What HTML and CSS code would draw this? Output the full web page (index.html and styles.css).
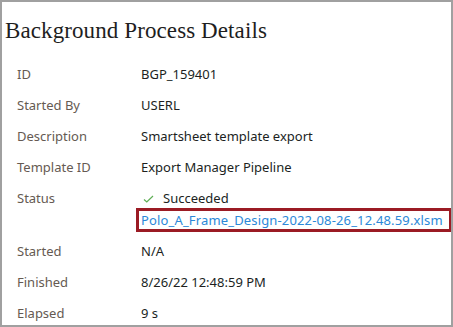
FILE: index.html
```html
<!DOCTYPE html>
<html lang="en">
<head>
    <meta charset="UTF-8">
    <title>Background Process Details</title>
    <link rel="stylesheet" href="styles.css">
</head>
<body>
    <div class="panel">
        <h1>Background Process Details</h1>
        <div class="details">
            <div class="label">ID</div>
            <div class="value">BGP_159401</div>
            <div class="label">Started By</div>
            <div class="value">USERL</div>
            <div class="label">Description</div>
            <div class="value">Smartsheet template export</div>
            <div class="label">Template ID</div>
            <div class="value">Export Manager Pipeline</div>
            <div class="label">Status</div>
            <div class="value">
                <div class="status">
                    <svg class="check" width="11" height="8" viewBox="0 0 11 8"><path d="M1 4.5 L3.8 7 L10 1" fill="none" stroke="#5fae55" stroke-width="1.2"/></svg>
                    <span>Succeeded</span>
                </div>
                <div class="file"><a href="#">Polo_A_Frame_Design-2022-08-26_12.48.59.xlsm</a></div>
            </div>
            <div class="label">Started</div>
            <div class="value">N/A</div>
            <div class="label">Finished</div>
            <div class="value">8/26/22 12:48:59 PM</div>
            <div class="label">Elapsed</div>
            <div class="value">9 s</div>
        </div>
    </div>
</body>
</html>
```
FILE: styles.css
```css
body {
    margin: 0;
    background-color: #fff;
}

.panel {
    width: 453px;
    height: 327px;
    box-sizing: border-box;
    border: 2px solid #a0a0a0;
    padding: 0 0 0 3px;
    overflow: hidden;
}

h1 {
    font-family: "Liberation Serif", serif;
    font-weight: normal;
    font-size: 23px;
    letter-spacing: 0.1px;
    color: #1e1e1e;
    margin: 16px 0 0 0;
    line-height: 26px;
}

.details {
    display: grid;
    grid-template-columns: 124px 1fr;
    margin: 15px 0 0 12px;
    font-family: "Noto Sans", sans-serif;
    font-size: 13px;
    line-height: 31px;
}

.label {
    color: #655a52;
}

.value {
    color: #201f1e;
}

.status {
    display: flex;
    align-items: center;
    gap: 9px;
    padding-left: 2px;
}

.file {
    margin: -6px 0 4px -5px;
    line-height: 18px;
    border: 3px solid #9b1b24;
    width: max-content;
    white-space: nowrap;
    padding: 0 6px 0 2px;
    letter-spacing: 0.15px;
}

.file a {
    color: #2b88d8;
    text-decoration: none;
}
```
